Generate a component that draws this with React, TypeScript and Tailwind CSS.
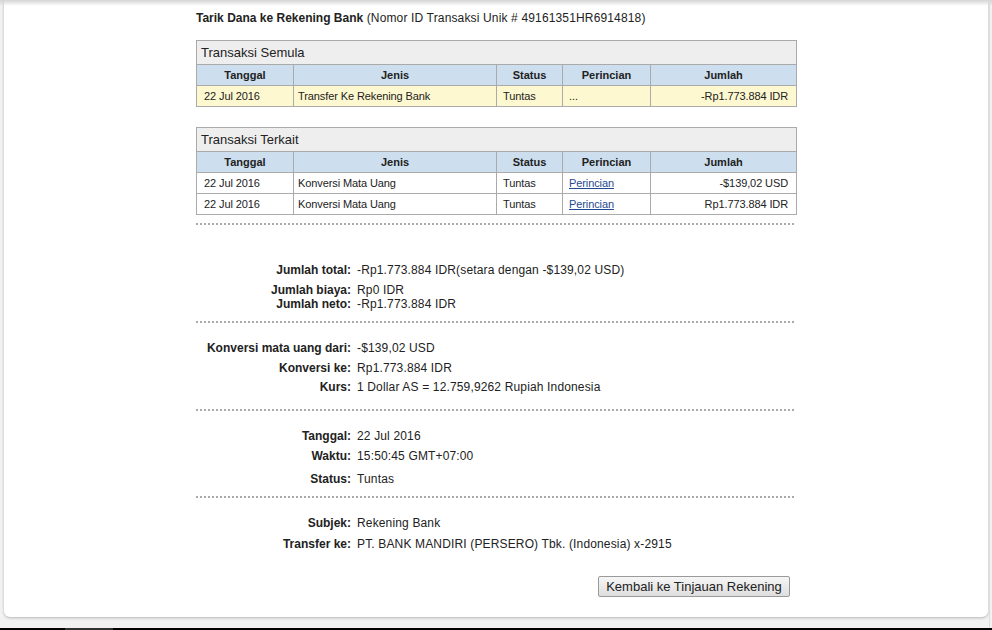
import React from "react";

const cols = ["w-[97px]", "w-[203px]", "w-[66px]", "w-[88px]", "w-[146px]"];

type Row = { d: string; j: string; s: string; p: string; link: boolean; a: string };

function TxTable({ title, rows, yellow }: { title: string; rows: Row[]; yellow?: boolean }) {
  return (
    <table className="w-[600px] border-collapse table-fixed text-[11px] leading-[13px] tracking-[-0.1px]">
      <colgroup>
        {cols.map((c, i) => (
          <col key={i} className={c} />
        ))}
      </colgroup>
      <thead>
        <tr className="h-[24px]">
          <th colSpan={5} className="border border-[#aaaaaa] bg-[#eeeeee] text-left font-normal text-[13px] tracking-normal pl-[4px]">
            {title}
          </th>
        </tr>
        <tr className="h-[21px] bg-[#cddeee]">
          {["Tanggal", "Jenis", "Status", "Perincian", "Jumlah"].map((h) => (
            <th key={h} className="border border-[#aaaaaa] font-bold text-center tracking-normal">
              {h}
            </th>
          ))}
        </tr>
      </thead>
      <tbody>
        {rows.map((r, i) => (
          <tr key={i} className={`h-[21px] ${yellow ? "bg-[#fdf8cf]" : "bg-white"}`}>
            <td className="border border-[#aaaaaa] pl-[7px]">{r.d}</td>
            <td className="border border-[#aaaaaa] pl-[4px]">{r.j}</td>
            <td className="border border-[#aaaaaa] pl-[6px]">{r.s}</td>
            <td className="border border-[#aaaaaa] pl-[6px]">
              {r.link ? <span className="underline text-[#1f4a8f]">{r.p}</span> : r.p}
            </td>
            <td className="border border-[#aaaaaa] text-right pr-[8px]">{r.a}</td>
          </tr>
        ))}
      </tbody>
    </table>
  );
}

function Dots({ className }: { className: string }) {
  return (
    <div
      className={`h-[2px] w-[600px] bg-[linear-gradient(to_right,#aaaaaa_50%,transparent_50%)] bg-[length:4px_2px] bg-repeat-x ${className}`}
    />
  );
}

function Field({ label, value, className }: { label: string; value: string; className: string }) {
  return (
    <div className={`grid grid-cols-[155px_1fr] gap-x-[6px] leading-[14px] ${className}`}>
      <div className="text-right font-bold">{label}</div>
      <div className="tracking-[0.15px]">{value}</div>
    </div>
  );
}

export default function App() {
  return (
    <div className="relative h-[630px] w-[992px] overflow-hidden bg-[#f2f2f2] font-['Liberation_Sans',Arial,sans-serif] text-[12px] text-[#222222]">
      <div className="flex h-[628px] flex-col">
        <div className="ml-[4px] w-[984px] h-[617px] rounded-b-[6px] bg-white shadow-[0_1px_3px_rgba(0,0,0,0.25)]">
          <div className="mx-auto flex w-[600px] flex-col">
            <div className="mt-[11px] leading-[14px]">
              <span className="font-bold">Tarik Dana ke Rekening Bank</span>
              <span className="tracking-[0.15px]"> (Nomor ID Transaksi Unik # 49161351HR6914818)</span>
            </div>
            <div className="mt-[15px]">
              <TxTable
                title="Transaksi Semula"
                yellow
                rows={[{ d: "22 Jul 2016", j: "Transfer Ke Rekening Bank", s: "Tuntas", p: "...", link: false, a: "-Rp1.773.884 IDR" }]}
              />
            </div>
            <div className="mt-[20px]">
              <TxTable
                title="Transaksi Terkait"
                rows={[
                  { d: "22 Jul 2016", j: "Konversi Mata Uang", s: "Tuntas", p: "Perincian", link: true, a: "-$139,02 USD" },
                  { d: "22 Jul 2016", j: "Konversi Mata Uang", s: "Tuntas", p: "Perincian", link: true, a: "Rp1.773.884 IDR" },
                ]}
              />
            </div>
            <Dots className="mt-[8px]" />
            <Field className="mt-[38px]" label="Jumlah total:" value="-Rp1.773.884 IDR(setara dengan -$139,02 USD)" />
            <Field className="mt-[6px]" label="Jumlah biaya:" value="Rp0 IDR" />
            <Field className="mt-0" label="Jumlah neto:" value="-Rp1.773.884 IDR" />
            <Dots className="mt-[10px]" />
            <Field className="mt-[18px]" label="Konversi mata uang dari:" value="-$139,02 USD" />
            <Field className="mt-[6px]" label="Konversi ke:" value="Rp1.773.884 IDR" />
            <Field className="mt-[5px]" label="Kurs:" value="1 Dollar AS = 12.759,9262 Rupiah Indonesia" />
            <Dots className="mt-[15px]" />
            <Field className="mt-[18px]" label="Tanggal:" value="22 Jul 2016" />
            <Field className="mt-[6px]" label="Waktu:" value="15:50:45 GMT+07:00" />
            <Field className="mt-[9px]" label="Status:" value="Tuntas" />
            <Dots className="mt-[10px]" />
            <Field className="mt-[18px]" label="Subjek:" value="Rekening Bank" />
            <Field className="mt-[7px]" label="Transfer ke:" value="PT. BANK MANDIRI (PERSERO) Tbk. (Indonesia) x-2915" />
            <div className="mt-[25px] flex justify-end pr-[6px]">
              <button className="h-[21px] w-[192px] rounded-[2px] border border-[#9a9a9a] bg-[linear-gradient(#f6f6f6,#dedede)] text-[13px] leading-[15px] text-[#222222]">
                Kembali ke Tinjauan Rekening
              </button>
            </div>
          </div>
        </div>
      </div>
      <div className="flex h-[2px]">
        <div className="w-[65px] bg-black" />
        <div className="w-[48px] bg-[#333333]" />
        <div className="flex-1 bg-black" />
      </div>
      <div className="pointer-events-none absolute inset-x-0 top-0 h-[6px] bg-[linear-gradient(#d4d4d4,rgba(255,255,255,0))]" />
      <div className="pointer-events-none absolute right-[2px] top-0 h-[628px] w-[1px] bg-[#dddddd]" />
    </div>
  );
}
